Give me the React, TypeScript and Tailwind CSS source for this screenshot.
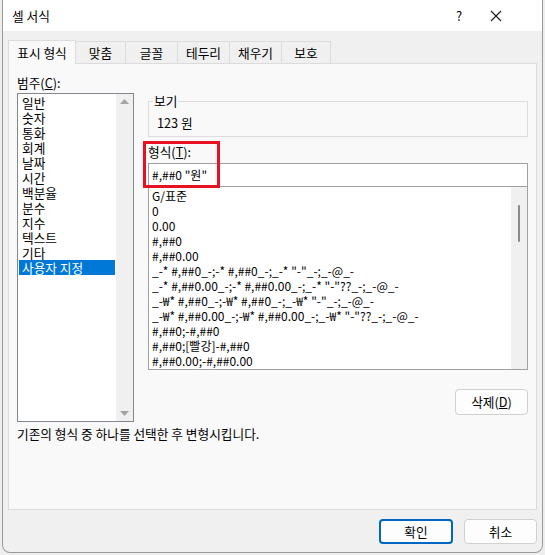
import React from "react"

const categories = ["일반", "숫자", "통화", "회계", "날짜", "시간", "백분율", "분수", "지수", "텍스트", "기타", "사용자 지정"]

const formats = [
  "G/표준",
  "0",
  "0.00",
  "#,##0",
  "#,##0.00",
  '_-* #,##0_-;-* #,##0_-;_-* "-"_-;_-@_-',
  '_-* #,##0.00_-;-* #,##0.00_-;_-* "-"??_-;_-@_-',
  '_-₩* #,##0_-;-₩* #,##0_-;_-₩* "-"_-;_-@_-',
  '_-₩* #,##0.00_-;-₩* #,##0.00_-;_-₩* "-"??_-;_-@_-',
  "#,##0;-#,##0",
  "#,##0;[빨강]-#,##0",
  "#,##0.00;-#,##0.00",
]

const tabs = ["표시 형식", "맞춤", "글꼴", "테두리", "채우기", "보호"]
const tabWidths = ["w-[68px]", "w-[50px]", "w-[52px]", "w-[52px]", "w-[52px]", "w-[49px]"]

const font = "font-['Segoe_UI','Noto_Sans_CJK_KR',sans-serif]"

export default function App() {
  return (
    <div className={`w-[545px] h-[555px] bg-[#eeeeee] text-[12.7px] text-black ${font}`}>
      <div className="ml-[2px] w-[541px] h-[553px] flex flex-col bg-[#f0f0f0] border-l border-b border-r border-[#9a9a9a] rounded-b-[8px] overflow-hidden">
        {/* title bar */}
        <div className="h-[31px] bg-white flex items-center pl-[9px]">
          <span>셀 서식</span>
          <span className="ml-auto w-[30px] text-center text-[13px]">?</span>
          <svg className="ml-[16px] mr-[40px]" width="12" height="12" viewBox="0 0 12 12">
            <path d="M1 1 L11 11 M11 1 L1 11" stroke="#222" strokeWidth="1.2" />
          </svg>
        </div>

        <div className="px-[5px] pt-[9px] flex flex-col flex-1">
          {/* tabs */}
          <div className="flex items-end h-[23px]">
            {tabs.map((t, i) => (
              <div
                key={t}
                className={
                  i === 0
                    ? `${tabWidths[i]} h-[24px] -mb-px z-10 bg-[#f9f9f9] border border-b-0 border-[#dcdcdc] flex items-center justify-center`
                    : `${tabWidths[i]} h-[22px] bg-[#f0f0f0] border border-b-0 border-l-0 border-[#dcdcdc] flex items-center justify-center`
                }
              >
                {t}
              </div>
            ))}
          </div>

          {/* panel */}
          <div className="h-[447px] bg-[#f9f9f9] border border-[#dcdcdc] px-[8px] pt-[11px] flex flex-col">
            <div className="flex gap-[14px]">
              <div className="flex flex-col">
                <div className="h-[16px] leading-[16px]">
                  범주(<span className="underline">C</span>):
                </div>
                <div className="mt-[2px] w-[117px] h-[329px] border border-[#828790] bg-white flex">
                  <div className="flex-1 pt-[1px] px-[1px]">
                    {categories.map((c, i) => (
                      <div
                        key={c}
                        className={
                          i === categories.length - 1
                            ? "h-[15px] leading-[15px] pl-[3px] bg-[#0078d7] text-white"
                            : "h-[15px] leading-[15px] pl-[3px]"
                        }
                      >
                        {c}
                      </div>
                    ))}
                  </div>
                  <div className="w-[17px] bg-[#f0f0f0] flex flex-col items-center justify-between py-[5px]">
                    <svg width="9" height="5" viewBox="0 0 9 5">
                      <path d="M0 5 L4.5 0 L9 5 Z" fill="#a3a3a3" />
                    </svg>
                    <svg width="9" height="5" viewBox="0 0 9 5">
                      <path d="M0 0 L4.5 5 L9 0 Z" fill="#a3a3a3" />
                    </svg>
                  </div>
                </div>
              </div>

              <div className="flex-1 flex flex-col pt-[20px]">
                {/* preview group */}
                <fieldset className="h-[42px] border border-[#dcdcdc] px-[4px]">
                  <legend className="px-[1px] leading-[12px]">보기</legend>
                  <div className="pl-[4px] leading-[16px] mt-[8px]">123 원</div>
                </fieldset>

                <div className="relative mt-[7px]">
                  <div className="absolute left-[-5px] top-[-3px] w-[77px] h-[47px] border-[3px] border-[#e81123] pointer-events-none z-10" />
                  <div className="h-[15px] leading-[15px]">
                    형식(<span className="underline">T</span>):
                  </div>
                  <div className="mt-[4px] h-[24px] border border-[#a0a0a0] bg-white pl-[3px] leading-[22px] text-[12px]">
                    #,##0 "원"
                  </div>
                </div>

                <div className="h-[183px] border border-[#a0a0a0] border-t-0 bg-white flex text-[12px]">
                  <div className="flex-1 pl-[3px] pt-[1px] whitespace-nowrap overflow-hidden">
                    {formats.map((f) => (
                      <div key={f} className="h-[15px] leading-[15px]">
                        {f}
                      </div>
                    ))}
                  </div>
                  <div className="w-[16px] bg-[#f0f0f0] flex justify-center pt-[18px]">
                    <div className="w-[2px] h-[37px] bg-[#8a8a8a] rounded-full" />
                  </div>
                </div>

                <div className="flex justify-end mt-[19px]">
                  <button className="w-[73px] h-[26px] bg-[#fdfdfd] border border-[#d0d0d0] rounded-[4px]">
                    삭제(<span className="underline">D</span>)
                  </button>
                </div>
              </div>
            </div>

            <div className="mt-[4px] leading-[16px]">기존의 형식 중 하나를 선택한 후 변형시킵니다.</div>
          </div>

          <div className="flex justify-end gap-[11px] mt-[9px]">
            <button className="w-[74px] h-[25px] bg-[#fdfdfd] border-2 border-[#0067c0] rounded-[4px]">확인</button>
            <button className="w-[73px] h-[25px] bg-[#fdfdfd] border border-[#d0d0d0] rounded-[4px]">취소</button>
          </div>
        </div>
      </div>
    </div>
  )
}
